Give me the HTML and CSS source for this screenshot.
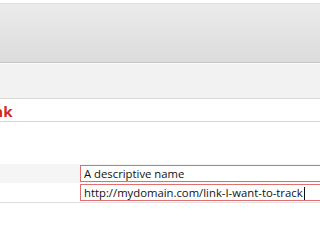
FILE: index.html
```html
<!DOCTYPE html>
<html lang="en">
<head>
  <meta charset="UTF-8">
  <title>Track a link</title>
  <link rel="stylesheet" href="styles.css">
</head>
<body>
  <div class="header"></div>
  <div class="subbar"></div>
  <div class="title-row">
    <h2 class="title">Add Link</h2>
  </div>

  <div class="form">
    <div class="row shaded">
      <label class="label">Name</label>
      <input class="field" type="text" value="A descriptive name">
    </div>
    <div class="row">
      <label class="label">URL</label>
      <div class="field">http://mydomain.com/link-I-want-to-track<span class="caret"></span></div>
    </div>
  </div>
</body>
</html>
```

FILE: styles.css
```css
body {
  margin: 0;
  background: #fff;
  font-family: 'Open Sans', sans-serif;
  overflow: hidden;
}
.header {
  margin-top: 3px;
  height: 58px;
  border-top: 1px solid #dedede;
  border-bottom: 1px solid #c6c6c6;
  background: linear-gradient(#ebebeb, #dcdcdc);
}
.subbar {
  height: 34px;
  background: #f2f2f2;
  border-top: 1px solid #fafafa;
  border-bottom: 1px solid #dadada;
}
.title-row {
  height: 22px;
  border-bottom: 1px solid #d6d6d6;
  overflow: hidden;
}
.title {
  margin: 0 0 0 -53px;
  font-size: 15px;
  font-weight: bold;
  line-height: 24px;
  color: #d0291f;
  white-space: nowrap;
}
.form {
  margin-top: 42px;
  border-bottom: 1px solid #dedede;
}
.row {
  display: flex;
  align-items: center;
  height: 19px;
}
.shaded {
  background: #f5f5f5;
}
.label {
  width: 80px;
  font-size: 11px;
  visibility: hidden;
}
.field {
  box-sizing: border-box;
  flex: 1;
  height: 17px;
  margin-right: -20px;
  padding: 0 3px;
  border: 1px solid #e07070;
  background: #fff;
  font-family: 'Open Sans', sans-serif;
  font-size: 11.3px;
  line-height: 15px;
  color: #111;
  white-space: nowrap;
  overflow: hidden;
  outline: none;
}
.caret {
  display: inline-block;
  width: 1px;
  height: 13px;
  background: #111;
  vertical-align: -3px;
  margin-left: 1px;
}
```
